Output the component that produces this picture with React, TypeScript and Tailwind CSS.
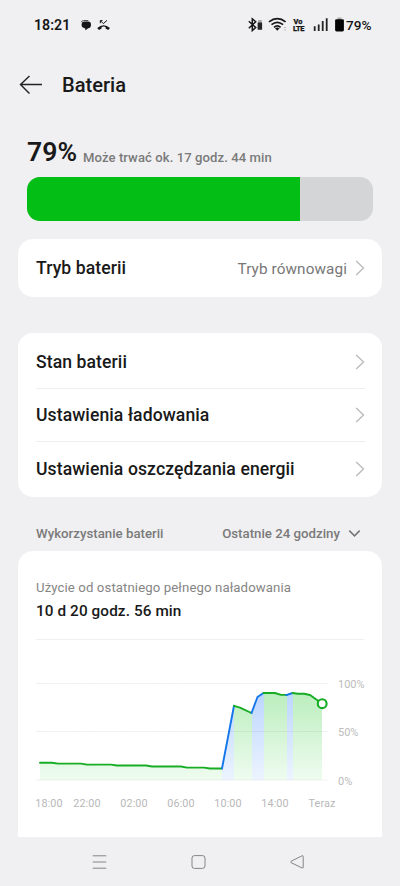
import React from "react";

function Chevron() {
  return (
    <svg className="shrink-0" width="10" height="16" viewBox="0 0 10 16" fill="none" stroke="#bcbcbe" strokeWidth="1.4">
      <path d="M1.2 1l7.3 7-7.3 7" />
    </svg>
  );
}

function StatusBar() {
  return (
    <header className="flex h-[50px] items-center pl-[34px] pr-[28px] text-[#161616]">
      <span className="mt-px w-[46px] whitespace-nowrap text-[14.2px] font-semibold">18:21</span>
      <svg className="mt-px" width="32" height="14" viewBox="0 0 32 14">
        <path d="M1.3 3.2Q1.8 1.5 3.5 1.5H8.3" stroke="#555" strokeWidth="1" fill="none" />
        <path d="M4.5 2.5H8Q11 2.5 11 5.8T8.2 9.3L5.5 11.3L5 9.2Q1.6 9 1.6 5.8T4.5 2.5Z" fill="#161616" />
        <path d="M17.2 9Q23.6 3.6 30 9L28.2 11L25.6 9.5V7.9Q23.6 7.3 21.6 7.9V9.5L19 11Z" fill="#161616" />
        <path d="M20.3 4.2V1.6H22.5M20.5 1.8L23.3 4.6L27 1.4" stroke="#161616" strokeWidth="1" fill="none" />
      </svg>
      <div className="ml-auto flex items-center">
        <svg width="98" height="18" viewBox="248 16 98 18" className="shrink-0">
          <g fill="none" stroke="#161616">
            <path d="M248.8 21.2L255.7 27.5L252.3 30.6V18.8L255.7 21.8L248.8 28.2" strokeWidth="1.5" />
            <path d="M269 21.8Q277.3 15.3 285.6 21.8M271.5 24.6Q277.3 20 283.1 24.6M274 27.3Q277.3 24.6 280.6 27.3" strokeWidth="1.7" />
          </g>
          <path d="M275 28.3Q277.3 26.8 279.6 28.3L277.3 30.8Z" fill="#161616" />
          <rect x="258" y="20" width="3.8" height="3" fill="#aaa" />
          <rect x="257.6" y="22.5" width="4.5" height="7.3" rx=".6" fill="#252525" />
          <path d="M284 27.5h2M284 29.8h2" stroke="#bbb" strokeWidth="1" />
          <g fill="#161616" stroke="#161616" strokeWidth=".25" fontFamily="Roboto, sans-serif" fontWeight="800" fontSize="7.4">
            <text x="293.6" y="23.7">Vo</text>
            <text x="293" y="31.2" letterSpacing="-.25">LTE</text>
          </g>
          <path d="M314.7 26.3V31M318.7 24.5V31M322.7 21V31M326.7 18.3V31" stroke="#222" strokeWidth="1.8" />
          <rect x="337.5" y="17.5" width="4" height="3" fill="#aaa" />
          <rect x="335.1" y="19.2" width="8.8" height="12.2" rx="1.4" fill="#050505" />
        </svg>
        <span className="w-[26px] whitespace-nowrap text-[13.6px] font-medium">79%</span>
      </div>
    </header>
  );
}

function MenuRow({ label, value, height }: { label: string; value?: string; height: string }) {
  return (
    <div className={"flex items-center " + height}>
      <span className="mt-px text-[17.6px] font-medium tracking-[0.08px]">{label}</span>
      <span className="ml-auto mr-[8px] mt-[2px] text-[15.3px] tracking-[0.1px] text-[#777]">{value}</span>
      <Chevron />
    </div>
  );
}

const xLabels: [number, string][] = [
  [49, "18:00"],
  [87, "22:00"],
  [134, "02:00"],
  [181, "06:00"],
  [228, "10:00"],
  [275, "14:00"],
  [322, "Teraz"],
];

const yLabels: [number, string][] = [
  [683.5, "100%"],
  [731.5, "50%"],
  [780, "0%"],
];

function UsageChart() {
  return (
    <svg className="block" width="364" height="180" viewBox="18 640 364 180">
      <defs>
        <linearGradient id="greenFill" gradientUnits="userSpaceOnUse" x1="0" y1="690" x2="0" y2="780">
          <stop offset="0" stopColor="#b9edbb" />
          <stop offset="1" stopColor="#effcf0" />
        </linearGradient>
        <linearGradient id="blueFill" gradientUnits="userSpaceOnUse" x1="0" y1="690" x2="0" y2="780">
          <stop offset="0" stopColor="#bad5ff" />
          <stop offset="1" stopColor="#edf4ff" />
        </linearGradient>
      </defs>
      <path d="M40 763L88 765L146 767L222 769V780H40Z" fill="url(#greenFill)" />
      <path d="M222 769L234 706V780H222Z" fill="url(#blueFill)" />
      <path d="M234 706L252 713V780H234Z" fill="url(#greenFill)" />
      <path d="M252 713L258 697L264 693V780H252Z" fill="url(#blueFill)" />
      <path d="M264 693H275L281 695H287V780H264Z" fill="url(#greenFill)" />
      <path d="M287 695L293 693V780H287Z" fill="url(#blueFill)" />
      <path d="M293 693L309 694.5L322 703.5V780H293Z" fill="url(#greenFill)" />
      {yLabels.map(([y, label]) => (
        <g key={label}>
          <path d={`M35.5 ${y}H328`} stroke="#777" strokeOpacity=".13" strokeDasharray="2 .7" />
          <text x="338" y={y + 4.7} fill="#bcbcbc" fontSize="11" letterSpacing="-.02">{label}</text>
        </g>
      ))}
      <g fill="none" strokeWidth="1.9" strokeLinejoin="round" strokeLinecap="round">
        <path d="M40 762.7H52L58 763.6H81L87 764.6H111L117 765.5H146L152 766.5H181L187 767.6H204L210 768.5H222" stroke="#16ad24" />
        <path d="M222 768.5L234 705.8" stroke="#1476eb" />
        <path d="M234 705.8L240 707.7L251.5 713" stroke="#16ad24" />
        <path d="M251.5 713L257.5 697L263.5 693" stroke="#1476eb" />
        <path d="M263.5 693H275L281 694.9H287" stroke="#16ad24" />
        <path d="M286 694.9H287L292.5 693" stroke="#1476eb" />
        <path d="M292.5 693L298 693.7L304 693.8L310 695L322 703.5" stroke="#16ad24" />
      </g>
      <circle cx="322.2" cy="703.7" r="4.4" fill="#fff" stroke="#14ad23" strokeWidth="2.1" />
      {xLabels.map(([x, label]) => (
        <text key={label} x={x} y="807" fill="#b8b8b8" fontSize="10.8" letterSpacing=".1" textAnchor="middle">
          {label}
        </text>
      ))}
    </svg>
  );
}

export default function App() {
  return (
    <div className="flex h-[886px] w-[400px] flex-col overflow-hidden bg-[#f0f0f2] font-['Roboto',sans-serif] text-[#191919]">
      <StatusBar />
      <div className="flex h-[70px] items-center pl-[19px]">
        <svg width="24" height="20" viewBox="0 0 24 20" fill="none" stroke="#222" strokeWidth="1.4">
          <path d="M10.5 1L1.5 9.5L10.5 18.5M1.5 9.5H23" />
        </svg>
        <h1 className="ml-[19px] mt-px text-[20.1px] font-medium">Bateria</h1>
      </div>

      <section className="flex h-[119px] flex-col px-[27px]">
        <div className="flex h-[57px] items-end pb-[9px]">
          <span className="w-[56px] text-[26.6px] font-semibold leading-[32px]">79%</span>
          <span className="whitespace-nowrap text-[13.1px] font-medium leading-[21px] tracking-[0.07px] text-[#7a7a7a]">Może trwać ok. 17 godz. 44 min</span>
        </div>
        <div className="h-[44px] overflow-hidden rounded-[13px] bg-[#d4d5d7]">
          <div className="h-full w-[79%] bg-[#03be14]" />
        </div>
      </section>

      <section className="mx-[18px] rounded-[15px] bg-white pl-[18px] pr-[17px]">
        <MenuRow label="Tryb baterii" value="Tryb równowagi" height="h-[58px]" />
      </section>

      <section className="mx-[18px] mt-[36px] rounded-[15px] bg-white pb-[2px] pl-[18px] pr-[17px] pt-[2px]">
        <MenuRow label="Stan baterii" height="h-[53px]" />
        <div className="h-px bg-[#eeeeef]" />
        <MenuRow label="Ustawienia ładowania" height="h-[52px]" />
        <div className="h-px bg-[#eeeeef]" />
        <MenuRow label="Ustawienia oszczędzania energii" height="h-[53px]" />
      </section>

      <div className="flex h-[54px] shrink-0 items-center pl-[36px] pr-[39px] pt-[19px] text-[13.25px] font-medium text-[#7a7a7a]">
        <span>Wykorzystanie baterii</span>
        <span className="ml-auto">Ostatnie 24 godziny</span>
        <svg className="ml-[8px]" width="13" height="8" viewBox="0 0 13 8" fill="none" stroke="#777" strokeWidth="1.6">
          <path d="M1.3 .6l5.2 5.2L11.7 .6" />
        </svg>
      </div>

      <section className="mx-[18px] h-[286px] shrink-0 rounded-t-[15px] bg-white">
        <div className="mx-[18px] h-[89px] border-b border-[#f0f0f1] pt-[27px]">
          <p className="text-[13.2px] leading-[19px] tracking-[0.1px] text-[#858585]">Użycie od ostatniego pełnego naładowania</p>
          <p className="mt-[4px] text-[15.3px] font-medium leading-[21px] tracking-[0.1px]">10 d 20 godz. 56 min</p>
        </div>
        <UsageChart />
      </section>

      <nav className="flex h-[49px] items-center justify-between pl-[92px] pr-[96px]">
        <svg width="15" height="14" viewBox="0 0 15 14" fill="none" stroke="#858587"><path d="M.7 .8H14.3M.7 7H14.3M.7 13.2H14.3" /></svg>
        <svg width="15" height="14" viewBox="0 0 15 14" fill="none" stroke="#858587"><rect x="1" y=".6" width="13" height="12.8" rx="2.4" /></svg>
        <svg width="14" height="14" viewBox="0 0 14 14" fill="none" stroke="#858587" strokeLinejoin="round"><path d="M1 6.3L12 .8Q13.2 .3 13.2 1.5V12Q13.2 13.6 12 12.9L1 7.6Q.1 7 1 6.3Z" /></svg>
      </nav>
    </div>
  );
}
